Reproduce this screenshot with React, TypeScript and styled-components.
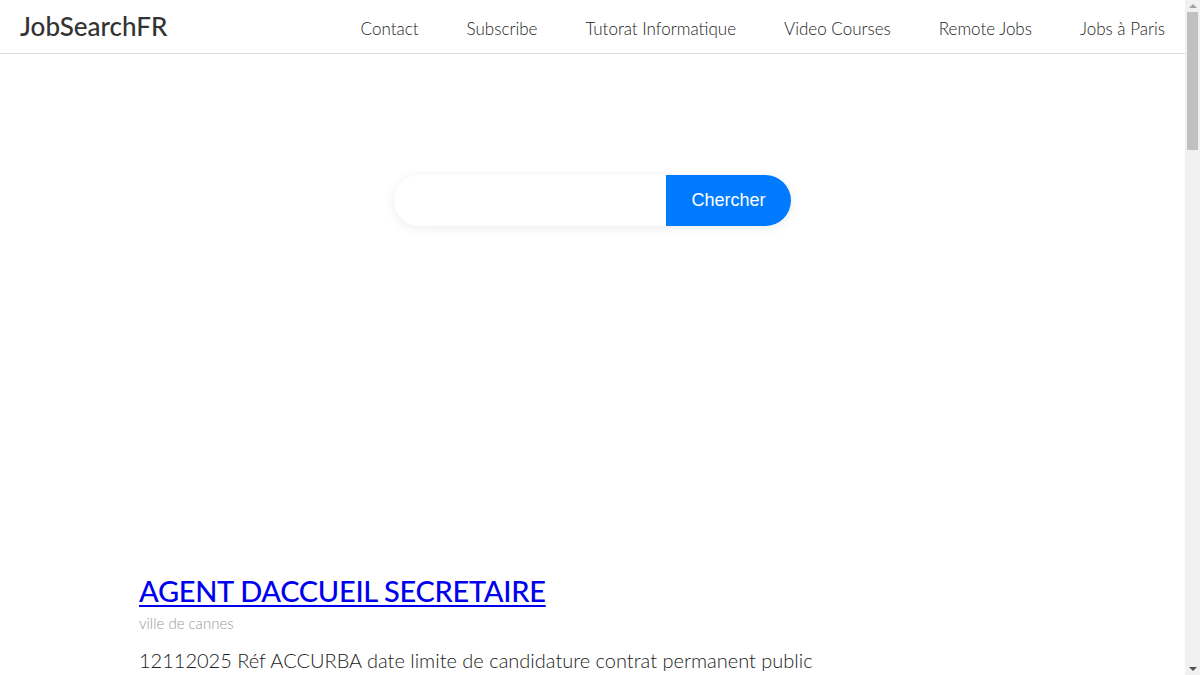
import styled, { createGlobalStyle } from "styled-components";

const GlobalStyle = createGlobalStyle`
  html, body {
    margin: 0;
    height: 100%;
    overflow: hidden;
  }
  body {
    font-family: "Lato", "Open Sans", sans-serif;
    color: #333;
    background: #fff;
  }
`;

const Frame = styled.div`
  display: flex;
  height: 100vh;
`;

const Page = styled.div`
  flex: 1;
  min-width: 0;
  overflow-y: auto;
  scrollbar-width: none;
  &::-webkit-scrollbar {
    display: none;
  }
`;

const ScrollTrack = styled.div`
  width: 15px;
  flex-shrink: 0;
  display: flex;
  flex-direction: column;
  align-items: center;
  background: #f1f1f1;
`;

const Arrow = styled.div<{ $down?: boolean; $dark?: boolean }>`
  height: 12px;
  width: 100%;
  display: flex;
  align-items: center;
  justify-content: center;

  &::after {
    content: "";
    width: 0;
    height: 0;
    border-left: 4px solid transparent;
    border-right: 4px solid transparent;
    ${({ $down, $dark }) =>
      $down
        ? `border-top: 4px solid ${$dark ? "#505050" : "#a3a3a3"};`
        : `border-bottom: 4px solid ${$dark ? "#505050" : "#a3a3a3"};`}
  }
`;

const Thumb = styled.div`
  width: 11px;
  height: 138px;
  background: #c1c1c1;
`;

const TrackFill = styled.div`
  flex: 1;
`;

const Header = styled.header`
  display: flex;
  align-items: center;
  justify-content: space-between;
  height: 53px;
  padding: 0 20px;
  border-bottom: 1px solid #dcdcdc;
`;

const Logo = styled.a`
  font-size: 26px;
  font-weight: 500;
  color: #333;
  text-decoration: none;
  margin-top: -2px;
`;

const Nav = styled.nav`
  display: flex;
  gap: 48px;
  margin-top: 4px;
`;

const NavLink = styled.a`
  font-size: 17px;
  font-weight: 300;
  color: #222;
  text-decoration: none;
`;

const SearchSection = styled.section`
  display: flex;
  justify-content: center;
  padding-top: 121px;
  height: 400px;
  box-sizing: border-box;
`;

const SearchForm = styled.form`
  display: flex;
  height: 51px;
  border-radius: 26px;
  box-shadow: 0 2px 12px rgba(0, 0, 0, 0.08);
  overflow: hidden;
`;

const SearchInput = styled.input`
  width: 272px;
  border: none;
  outline: none;
  padding: 0 20px;
  box-sizing: border-box;
  font-size: 16px;
  background: #fff;
`;

const SearchButton = styled.button`
  width: 125px;
  border: none;
  background: #007bff;
  color: #fff;
  font-family: "Liberation Sans", Arial, sans-serif;
  font-size: 18px;
  cursor: pointer;
`;

const Listing = styled.main`
  max-width: 907px;
  margin: 0 auto;
  padding-top: 119px;
`;

const Job = styled.article`
  margin-bottom: 60px;
`;

const JobTitle = styled.a`
  display: inline-block;
  font-size: 29px;
  font-weight: 500;
  color: #0000ee;
  letter-spacing: -0.3px;
  text-decoration: underline;
  text-underline-offset: 3px;
`;

const Company = styled.div`
  font-size: 15px;
  font-weight: 300;
  color: #999;
  margin-top: 6px;
`;

const Description = styled.p`
  font-size: 20px;
  font-weight: 300;
  color: #222;
  margin: 13px 0 0;
  line-height: 1.5;
`;

const Spacer = styled.div`
  height: 1700px;
`;

const jobs = [
  {
    title: "AGENT DACCUEIL SECRETAIRE",
    company: "ville de cannes",
    text: "12112025 Réf ACCURBA date limite de candidature contrat permanent public",
  },
  {
    title: "ASSISTANT ADMINISTRATIF",
    company: "ville de nice",
    text: "Poste à pourvoir rapidement au sein du service des ressources humaines",
  },
  {
    title: "DEVELOPPEUR WEB",
    company: "agence digitale",
    text: "Vous rejoindrez une équipe dynamique pour concevoir des applications web",
  },
  {
    title: "COMPTABLE",
    company: "cabinet comptable",
    text: "Tenue de la comptabilité générale et préparation des déclarations fiscales",
  },
];

const navItems = [
  "Contact",
  "Subscribe",
  "Tutorat Informatique",
  "Video Courses",
  "Remote Jobs",
  "Jobs à Paris",
];

export default function App() {
  return (
    <Frame>
      <GlobalStyle />
      <Page>
        <Header>
          <Logo href="#">JobSearchFR</Logo>
          <Nav>
            {navItems.map((item) => (
              <NavLink key={item} href="#">
                {item}
              </NavLink>
            ))}
          </Nav>
        </Header>
        <SearchSection>
          <SearchForm onSubmit={(e) => e.preventDefault()}>
            <SearchInput type="text" />
            <SearchButton type="submit">Chercher</SearchButton>
          </SearchForm>
        </SearchSection>
        <Listing>
          {jobs.map((job) => (
            <Job key={job.title}>
              <JobTitle href="#">{job.title}</JobTitle>
              <Company>{job.company}</Company>
              <Description>{job.text}</Description>
            </Job>
          ))}
          <Spacer />
        </Listing>
      </Page>
      <ScrollTrack>
        <Arrow />
        <Thumb />
        <TrackFill />
        <Arrow $down $dark />
      </ScrollTrack>
    </Frame>
  );
}
